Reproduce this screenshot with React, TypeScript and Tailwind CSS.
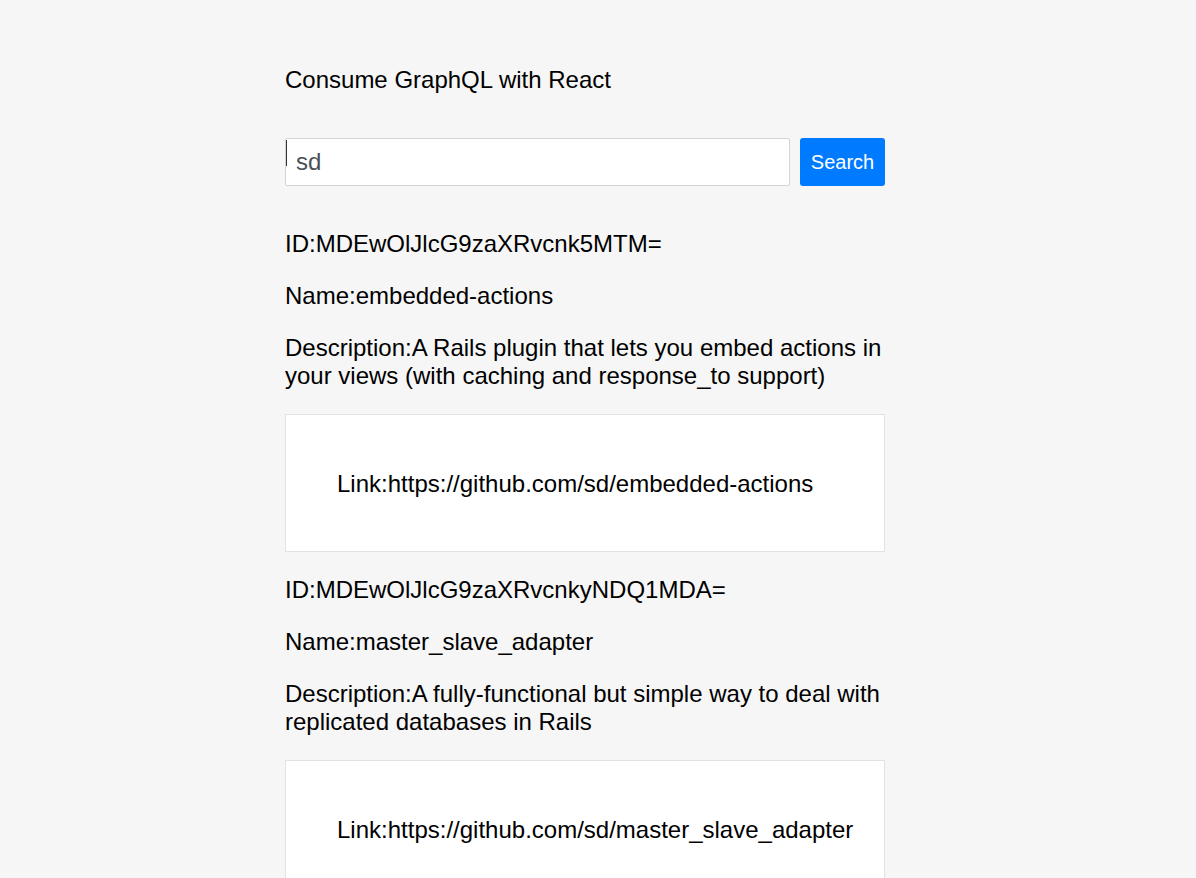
import React from 'react';

type Repo = {
  id: string;
  name: string;
  description: string;
  url: string;
};

const repos: Repo[] = [
  {
    id: 'MDEwOlJlcG9zaXRvcnk5MTM=',
    name: 'embedded-actions',
    description: 'A Rails plugin that lets you embed actions in your views (with caching and response_to support)',
    url: 'https://github.com/sd/embedded-actions',
  },
  {
    id: 'MDEwOlJlcG9zaXRvcnkyNDQ1MDA=',
    name: 'master_slave_adapter',
    description: 'A fully-functional but simple way to deal with replicated databases in Rails',
    url: 'https://github.com/sd/master_slave_adapter',
  },
];

const RepoItem: React.FC<{ repo: Repo }> = ({ repo }) => {
  return (
    <div className="mb-[24px]">
      <p className="mb-[24px]">ID:{repo.id}</p>
      <p className="mb-[24px]">Name:{repo.name}</p>
      <p className="mb-[24px]">Description:{repo.description}</p>
      <div className="bg-white border border-[#e2e2e2] px-[51px] pt-[55px] pb-[53px]">
        <p>Link:{repo.url}</p>
      </div>
    </div>
  );
};

const App: React.FC = () => {
  return (
    <div
      className="min-h-screen bg-[#f6f6f6] text-black pr-[26px] text-[24px] leading-[28px]"
      style={{ fontFamily: '"Liberation Sans", Arial, sans-serif' }}
    >
      <div className="w-[600px] mx-auto pt-[66px]">
        <h1 className="font-normal">Consume GraphQL with React</h1>

        <form className="flex gap-[10px] mt-[44px] mb-[44px]" onSubmit={(e) => e.preventDefault()}>
          <div className="relative flex-1">
            <input
              type="text"
              defaultValue="sd"
              className="w-full h-[48px] bg-white border border-[#d4d4d4] rounded-[2px] px-[10px] text-[24px] text-[#495057] outline-none"
            />
            <span className="absolute left-[1px] top-[2px] w-[1px] h-[26px] bg-[#333]" />
          </div>
          <button
            type="submit"
            className="w-[85px] h-[48px] bg-[#007bff] text-white text-[20px] rounded-[3px]"
          >
            Search
          </button>
        </form>

        {repos.map((repo) => (
          <RepoItem key={repo.id} repo={repo} />
        ))}
      </div>
    </div>
  );
};

export default App;
